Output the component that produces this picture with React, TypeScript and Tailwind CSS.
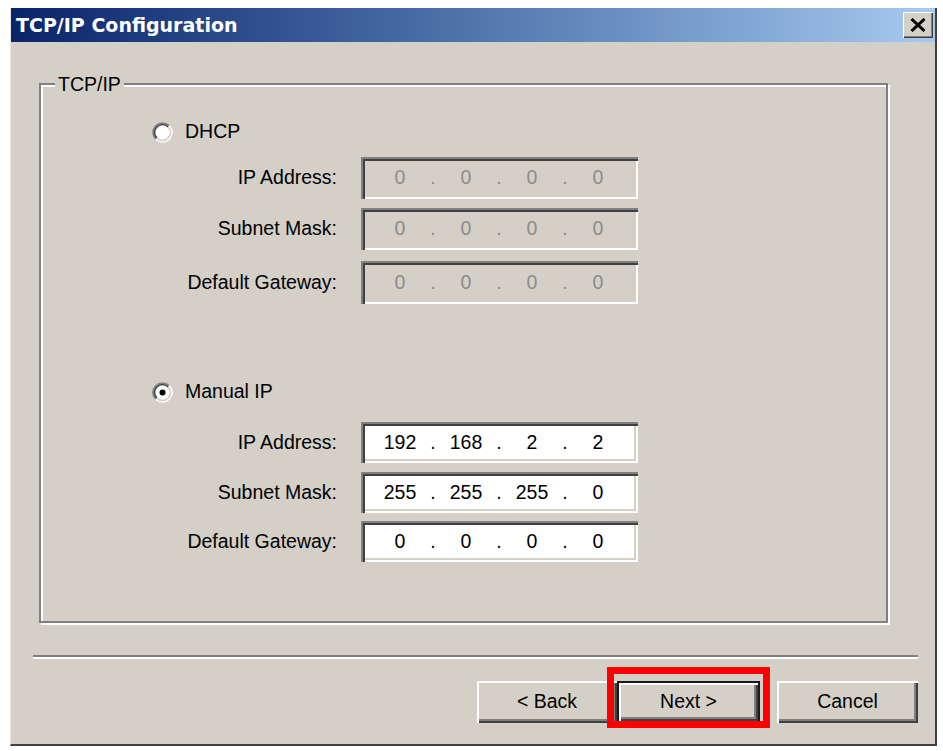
import React from "react";

const UI_FONT = "font-['Liberation_Sans',Arial,sans-serif]";

function Radio({ checked }: { checked?: boolean }) {
  return (
    <svg width="21" height="21" viewBox="0 0 21 21" className="shrink-0">
      <circle cx="10.5" cy="10.5" r="9" fill="#ffffff" />
      <path d="M 3.78 17.22 A 9.5 9.5 0 0 1 17.22 3.78" fill="none" stroke="#808080" strokeWidth="1.6" />
      <path d="M 4.84 16.16 A 8 8 0 0 1 16.16 4.84" fill="none" stroke="#404040" strokeWidth="1.6" />
      <path d="M 17.22 3.78 A 9.5 9.5 0 0 1 3.78 17.22" fill="none" stroke="#ffffff" strokeWidth="1.6" />
      <path d="M 16.16 4.84 A 8 8 0 0 1 4.84 16.16" fill="none" stroke="#d4d0c8" strokeWidth="1.6" />
      {checked && <circle cx="10.5" cy="10.5" r="3" fill="#000000" />}
    </svg>
  );
}

function IpField({ label, octets, disabled, className }: { label: string; octets: string[]; disabled?: boolean; className: string }) {
  return (
    <div className={`flex items-center gap-[24px] ${className}`}>
      <div className="w-[296px] text-right text-black">{label}</div>
      <div
        className={`flex h-full w-[277px] items-center pl-[14px] shadow-[inset_2px_2px_0_#808080,inset_4px_4px_0_#404040,inset_-2px_-2px_0_#ffffff,inset_-4px_-4px_0_#d4d0c8] ${
          disabled ? "bg-[#d4d0c8] text-[#8c8c8c]" : "bg-white text-black"
        }`}
      >
        {octets.map((o, i) => (
          <React.Fragment key={i}>
            {i > 0 && <span className="w-[16px] text-center">.</span>}
            <span className="w-[50px] text-center">{o}</span>
          </React.Fragment>
        ))}
      </div>
    </div>
  );
}

function Button({ children, isDefault, className = "" }: { children: React.ReactNode; isDefault?: boolean; className?: string }) {
  return (
    <button
      className={`flex h-[42px] items-center justify-center bg-[#d4d0c8] text-black ${
        isDefault
          ? "border-2 border-[#1a1a1a] shadow-[inset_2px_2px_0_#ffffff,inset_-2px_-2px_0_#404040,inset_-4px_-4px_0_#808080]"
          : "shadow-[inset_2px_2px_0_#ffffff,inset_-2px_-2px_0_#404040,inset_-4px_-4px_0_#808080]"
      } ${className}`}
    >
      {children}
    </button>
  );
}

export default function App() {
  return (
    <div className={`min-h-[751px] w-[943px] bg-white pt-[8px] pl-[10px] ${UI_FONT} text-[19.5px] leading-none`}>
      <div className="relative flex h-[738px] w-[927px] flex-col border-l border-l-[#ece9d8] border-r-2 border-r-[#404040] border-b-2 border-b-[#404040] bg-[#d4d0c8]">
        {/* title bar */}
        <div className="flex h-[34px] shrink-0 items-center justify-between bg-gradient-to-r from-[#0a246a] to-[#a6caf0] pl-[5px] pr-[2px]">
          <span className="font-['DejaVu_Sans',sans-serif] text-[19px] font-bold text-white">TCP/IP Configuration</span>
          <div className="flex h-[26px] w-[30px] items-center justify-center bg-[#d4d0c8] shadow-[inset_1px_1px_0_#ffffff,inset_-1px_-1px_0_#404040,inset_-2px_-2px_0_#808080]">
            <svg width="16" height="14" viewBox="0 0 16 14">
              <path d="M1.5 1 L14.5 13 M14.5 1 L1.5 13" stroke="#000" strokeWidth="3" />
            </svg>
          </div>
        </div>

        {/* group box */}
        <div className="relative ml-[28px] mt-[41px] flex h-[540px] w-[849px] flex-col border-2 border-[#808080] shadow-[inset_2px_2px_0_#ffffff,2px_2px_0_#ffffff]">
          <span className="absolute left-[14px] top-[-13px] bg-[#d4d0c8] px-[3px] leading-[24px] text-black">TCP/IP</span>

          <div className="ml-[111px] mt-[35px] flex h-[24px] items-center gap-[12px] text-black">
            <Radio />
            <span>DHCP</span>
          </div>
          <IpField className="mt-[13px] h-[42px]" label="IP Address:" octets={["0", "0", "0", "0"]} disabled />
          <IpField className="mt-[9px] h-[42px]" label="Subnet Mask:" octets={["0", "0", "0", "0"]} disabled />
          <IpField className="mt-[11px] h-[43px]" label="Default Gateway:" octets={["0", "0", "0", "0"]} disabled />

          <div className="ml-[111px] mt-[76px] flex h-[24px] items-center gap-[12px] text-black">
            <Radio checked />
            <span>Manual IP</span>
          </div>
          <IpField className="mt-[18px] h-[41px]" label="IP Address:" octets={["192", "168", "2", "2"]} />
          <IpField className="mt-[9px] h-[41px]" label="Subnet Mask:" octets={["255", "255", "255", "0"]} />
          <IpField className="mt-[8px] h-[41px]" label="Default Gateway:" octets={["0", "0", "0", "0"]} />
        </div>

        {/* separator */}
        <div className="ml-[22px] mt-[32px] h-[2px] w-[885px] border-t-2 border-[#808080] shadow-[0_2px_0_#ffffff]" />

        {/* buttons */}
        <div className="mt-[24px] flex justify-end pr-[17px]">
          <Button className="w-[140px]">&lt; Back</Button>
          <Button className="w-[143px]" isDefault>
            Next &gt;
          </Button>
          <Button className="ml-[17px] w-[141px]">Cancel</Button>
        </div>

        {/* annotation */}
        <div className="pointer-events-none absolute left-[596px] top-[659px] h-[61px] w-[163px] border-[7px] border-[#ff0000]" />
      </div>
    </div>
  );
}
